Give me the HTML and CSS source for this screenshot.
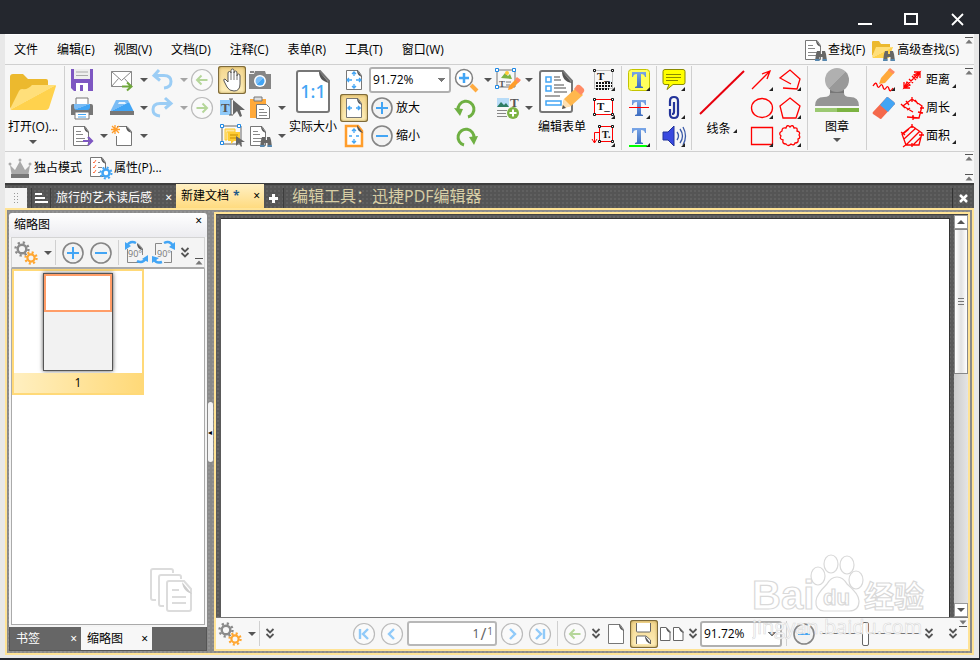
FILE: index.html
```html
<!DOCTYPE html>
<html lang="zh-CN">
<head>
    <meta charset="UTF-8">
    <meta name="viewport" content="width=device-width, initial-scale=1.0">
    <title>迅捷PDF编辑器</title>
    <link rel="stylesheet" href="styles.css">
</head>
<body>
    <!-- Shared icons -->
    <svg width="0" height="0" class="sprite" aria-hidden="true">
        <defs>
            <linearGradient id="gFolder" x1="0" y1="0" x2="1" y2="1"><stop offset=".5" stop-color="#ffdf7a"/><stop offset=".51" stop-color="#ffd24d"/></linearGradient>
            <linearGradient id="gGrey" x1="0" y1="0" x2="1" y2="1"><stop offset=".5" stop-color="#b0b0b0"/><stop offset=".51" stop-color="#999"/></linearGradient>
            <linearGradient id="gStamp" x1="0" y1="0" x2="1" y2="0"><stop offset=".5" stop-color="#9cc972"/><stop offset=".51" stop-color="#7cb342"/></linearGradient>
            <linearGradient id="gBlue" x1="0" y1="0" x2="1" y2="1"><stop offset=".5" stop-color="#7abcf5"/><stop offset=".51" stop-color="#42a5f5"/></linearGradient>
            <linearGradient id="gT" x1="0" y1="0" x2="0" y2="1"><stop offset="0" stop-color="#7aa7e8"/><stop offset="1" stop-color="#3d6cc0"/></linearGradient>
        </defs>
        <symbol id="plus" viewBox="0 0 28 28"><circle cx="14" cy="14" r="10" fill="#f2f2f2" stroke="#858585" stroke-width="1.6"/><path d="M8 14h12M14 8v12" stroke="#42a5f5" stroke-width="2"/></symbol>
        <symbol id="minus" viewBox="0 0 28 28"><circle cx="14" cy="14" r="10" fill="#f2f2f2" stroke="#858585" stroke-width="1.6"/><path d="M8 14h12" stroke="#42a5f5" stroke-width="2"/></symbol>
        <symbol id="back" viewBox="0 0 28 28"><circle cx="14" cy="14" r="10.5" fill="#fafafa" stroke="#bbb" stroke-width="1.2"/><path d="M19.500 14H9M13.500 9.500L9 14l4.500 4.500" fill="none" stroke="#b5d69a" stroke-width="2"/></symbol>
        <symbol id="fwd" viewBox="0 0 28 28"><circle cx="14" cy="14" r="10.5" fill="#fafafa" stroke="#bbb" stroke-width="1.2"/><path d="M8.500 14H19M14.500 9.500L19 14l-4.500 4.500" fill="none" stroke="#b5d69a" stroke-width="2"/></symbol>
        <symbol id="gears" viewBox="0 0 28 28"><circle cx="10" cy="10" r="4.300" fill="none" stroke="#8a8a8a" stroke-width="2.400"/><circle cx="10" cy="10" r="6.500" fill="none" stroke="#8a8a8a" stroke-width="2.400" stroke-dasharray="2.200 2.900"/><circle cx="19" cy="19" r="3.600" fill="none" stroke="#ffa630" stroke-width="2.200"/><circle cx="19" cy="19" r="5.500" fill="none" stroke="#ffa630" stroke-width="2.400" stroke-dasharray="2 2.320"/></symbol>
        <symbol id="chev" viewBox="0 0 10 12"><path d="M1.500 1L5 4.500 8.500 1M1.500 6L5 9.500 8.500 6" fill="none" stroke="#555" stroke-width="1.800"/></symbol>
        <symbol id="pin" viewBox="0 0 8 7"><path d="M0 .5h8" stroke="#555"/><path d="M4 2.500L7.500 6.500h-7z" fill="#777"/></symbol>
        <symbol id="binoc" viewBox="0 0 12 12"><path d="M1 4L2 1h3v3h2V1h3l1 3 1 7H7.500V7h-3v4H0z" fill="#666"/><path d="M0 10h4.500M7.500 10H12" stroke="#42a5f5"/></symbol>
        <symbol id="doc" viewBox="0 0 28 28"><path d="M5.500 4.500H17l3.500 5v14h-15z" fill="#fff" stroke="#777"/><path d="M16 4l5 7c-3-1-5-3-5-7z" fill="#555"/></symbol>
        <symbol id="lines" viewBox="0 0 28 28"><use href="#doc"/><path d="M8 9.500h5M8 12.500h7M8 16.500h9M8 19.500h8" stroke="#888"/></symbol>
        <symbol id="tserif" viewBox="0 0 28 28"><path d="M7 6h14v5h-1c-.4-2-1.200-3-4-3v11.500c0 1 .8 1.200 2 1.300V22h-8v-1.200c1.200-.1 2-.3 2-1.300V8c-2.800 0-3.600 1-4 3H7z" fill="url(#gT)"/></symbol>
        <symbol id="tri" viewBox="0 0 28 28"><path d="M25 21v4h-4z" fill="#222"/></symbol>
    </svg>

    <header class="titlebar">
        <button class="win-btn" aria-label="最小化"><svg width="14" height="14"><path d="M0 12h14" stroke="#fff" stroke-width="2"/></svg></button>
        <button class="win-btn" aria-label="最大化"><svg width="14" height="14"><path d="M1 2h12v10H1z" fill="none" stroke="#fff" stroke-width="2"/></svg></button>
        <button class="win-btn" aria-label="关闭"><svg width="14" height="14"><path d="M2 2l11 11M13 2L2 13" stroke="#fff" stroke-width="1.800"/></svg></button>
    </header>

    <div class="frame">
        <nav class="menubar">
            <button>文件</button>
            <button>编辑(E)</button>
            <button>视图(V)</button>
            <button>文档(D)</button>
            <button>注释(C)</button>
            <button>表单(R)</button>
            <button>工具(T)</button>
            <button>窗口(W)</button>
            <div class="search">
                <button><svg width="28" height="28"><use href="#lines"/><use href="#binoc" x="15" y="14" width="12" height="12"/></svg>查找(F)</button>
                <button><svg width="28" height="28"><path d="M3 6q0-1 1-1h6l2 3h9v5H8L3 20z" fill="#ecb92e"/><path d="M3 21l4-10h17l-4 11H4z" fill="url(#gFolder)"/><use href="#binoc" x="14" y="14" width="12" height="12"/></svg>高级查找(S)</button>
            </div>
            <svg class="pin" width="8" height="7"><use href="#pin"/></svg>
        </nav>

        <div class="ribbon">
            <button class="big open">
                <svg width="48" height="42"><path d="M1 5q0-3 3-3h10l5 5h18q2 0 2 2v6L1 36z" fill="#ecb92e"/><path d="M1 37l9-18q1-2 3-2 6 1 10-4h23q1 0 1 1l-7 22q-1 2-3 2H3q-2 0-2-1z" fill="url(#gFolder)"/></svg>
                <span>打开(O)...</span>
                <i class="arrow"></i>
            </button>
            <div class="sep"></div>
            <div class="stack wide">
                <button class="tool" aria-label="保存"><svg width="28" height="28"><path d="M3 3h22v22H6l-3-3z" fill="#7e57c2"/><path d="M6 3h16v10H6z" fill="#eee"/><path d="M8 6h12M8 9.500h12" stroke="#aaa"/><path d="M8 17h12v8H8z" fill="#fff"/><path d="M12 19h3v6h-3z" fill="#7e57c2"/></svg></button>
                <button class="tool" aria-label="打印"><svg width="28" height="28"><path d="M3 12q0-2 2-2h18q2 0 2 2v9H3z" fill="#777"/><path d="M8 4h12v7H8z" fill="#fff" stroke="#777"/><path d="M6 10h16v3q0 3-3 3H9q-3 0-3-3z" fill="url(#gBlue)"/><path d="M7 18h14v7H7z" fill="#fff" stroke="#777"/><path d="M10 20.500h8M10 23h8" stroke="#42a5f5"/></svg></button>
                <button class="tool drop" aria-label="导出"><svg width="28" height="28"><use href="#lines"/><path d="M15 19h9M20 15l4 4-4 4" fill="none" stroke="#7e57c2" stroke-width="2.200"/></svg><i class="arrow"></i></button>
            </div>
            <div class="stack wide">
                <button class="tool drop" aria-label="发送"><svg width="28" height="28"><path d="M3.500 5.500h20v15h-20z" fill="#fff" stroke="#888"/><path d="M3.500 5.500l10 9 10-9M3.500 20.500l7-8M23.500 20.500l-7-8" fill="none" stroke="#888"/><path d="M14 20.500h9M19 16.500l4.500 4-4.500 4" fill="none" stroke="#6fa83b" stroke-width="2"/></svg><i class="arrow"></i></button>
                <button class="tool drop" aria-label="扫描"><svg width="28" height="28"><path d="M8 6h12l6 12H2z" fill="url(#gBlue)"/><path d="M11 8h6l1 2h-8z" fill="#e6f3ff"/><path d="M2 17h24v4H2z" fill="#777"/></svg><i class="arrow"></i></button>
                <button class="tool drop" aria-label="新建"><svg width="28" height="28"><path d="M9 4.500h10l4.500 5v14h-15V14" fill="#fff" stroke="#777"/><path d="M18 4l6 7c-4-1-6-3-6-7z" fill="#555"/><path d="M7 3v9M3 7.500h9M4 4l7 7M11 4l-7 7" stroke="#ff9d2b" stroke-width="1.300"/></svg><i class="arrow"></i></button>
            </div>
            <div class="stack wide">
                <button class="tool drop faded" aria-label="撤销"><svg width="28" height="28"><path d="M11 4L6 9.500l6 5M6 9.500h10q7 0 7 6 0 6-7 6.500" fill="none" stroke="#42a5f5" stroke-width="3"/></svg><i class="arrow"></i></button>
                <button class="tool drop faded" aria-label="重做"><svg width="28" height="28"><path d="M17 4l6 5.500-6 5M22 9.500H12q-7 0-7 6 0 6 7 6.500" fill="none" stroke="#42a5f5" stroke-width="3"/></svg><i class="arrow"></i></button>
            </div>
            <div class="stack nav">
                <button class="tool" aria-label="后退"><svg width="28" height="28"><use href="#back"/></svg></button>
                <button class="tool" aria-label="前进"><svg width="28" height="28"><use href="#fwd"/></svg></button>
            </div>
            <div class="stack">
                <button class="tool active" aria-label="手形工具"><svg width="28" height="28"><path d="M9 21l-3-6q-1-2 1-2l3 3V7q0-1.500 1.500-1.500T13 7V4.500Q13 3 14.500 3T16 4.500V7q0-2 1.500-2T19 7v3q0-2 1.500-2T22 10v8q0 7-6 7-5 0-7-4z" fill="#fff" stroke="#555"/><path d="M13 6v8M16 6v8M19 9v5" stroke="#777"/></svg></button>
                <button class="tool" aria-label="选择文本"><svg width="28" height="28"><path d="M2 6h11v15H2z" fill="#90caf9"/><text x="3" y="18" class="icon-serif" font-size="13" fill="#555">T</text><path d="M11 5h4M13 5v16M11 21h4" stroke="#555"/><path d="M15 6v15l4-4 3 6 2-1-2-6h5z" fill="#666"/></svg></button>
                <button class="tool" aria-label="选择注释"><svg width="28" height="28"><path d="M4 4h19v18H4z" fill="none" stroke="#666"/><path d="M2.500 2.500h3v3h-3zM19.500 2.500h3v3h-3zM2.500 19.500h3v3h-3z" fill="#fff" stroke="#1e88e5"/><path d="M7 7h10v3H9v8H7z" fill="#ffe59a" stroke="#ffca28"/><path d="M10 10h12v9h-6l-3 3v-3h-3z" fill="#fc3"/><path d="M12 13h8M12 16h8" stroke="#c58b00"/><path d="M18 14v10l3-3 2 4 1-1-1-4h4z" fill="#666"/></svg></button>
            </div>
            <div class="stack wide">
                <button class="tool" aria-label="快照"><svg width="28" height="28"><path d="M3 8h5l1-3h10l1 3h5v15H3z" fill="#858585"/><path d="M4 5h4v2H4z" fill="#888"/><circle cx="14" cy="15" r="6" fill="#fff"/><circle cx="14" cy="15" r="4.500" fill="url(#gBlue)"/></svg></button>
                <button class="tool drop" aria-label="粘贴"><svg width="28" height="28"><path d="M4 5h16v19H4z" fill="#ffa93a"/><path d="M8 3h8v4H8z" fill="#ddd" stroke="#777"/><path d="M10.500 10.500h10l3 3v11h-13z" fill="#fff" stroke="#777"/><path d="M13 15.500h5M13 18.500h8M13 21.500h8" stroke="#888"/></svg><i class="arrow"></i></button>
                <button class="tool drop" aria-label="查找"><svg width="28" height="28"><use href="#lines" x="-1"/><use href="#binoc" x="14" y="14" width="12" height="12"/></svg><i class="arrow"></i></button>
            </div>
            <button class="big actual">
                <svg width="36" height="44"><path d="M4 1h21l9 10v29q0 2-2 2H4q-2 0-2-2V3q0-2 2-2z" fill="#fff" stroke="#777" stroke-width="2"/><path d="M24 1l10 12C27 11 24 8 24 1z" fill="#555"/><text x="18" y="28" text-anchor="middle" class="icon-num" font-size="18" fill="#42a5f5">1:1</text></svg>
                <span>实际大小</span>
            </button>
            <div class="stack">
                <button class="tool" aria-label="适合页面"><svg width="28" height="28"><use href="#doc" x="1"/><path d="M14 6v4M14 18v4M8 14h4M16 14h4M12 8l2-2 2 2M12 20l2 2 2-2M9 12l-2 2 2 2M19 12l2 2-2 2" fill="none" stroke="#42a5f5" stroke-width="1.300"/></svg></button>
                <button class="tool active" aria-label="适合宽度"><svg width="28" height="28"><use href="#doc" x="1"/><path d="M8 14h4M16 14h4M10 12l-2 2 2 2M18 12l2 2-2 2" fill="none" stroke="#42a5f5" stroke-width="1.500"/></svg></button>
                <button class="tool" aria-label="适合可见区域"><svg width="28" height="28"><path d="M6 4h12l4 5v15H6z" fill="#fff" stroke="#ff9d2b" stroke-width="2.500"/><path d="M17 3l6 8c-4-1-6-3-6-8z" fill="#555"/><path d="M14 7v4M14 17v4M9 14h3M16 14h3M12 9l2-2 2 2M12 19l2 2 2-2" fill="none" stroke="#42a5f5" stroke-width="1.300"/></svg></button>
            </div>
            <div class="stack zoom">
                <select class="combo" aria-label="缩放"><option>91.72%</option></select>
                <button class="tool label"><svg width="28" height="28"><use href="#plus"/></svg>放大</button>
                <button class="tool label"><svg width="28" height="28"><use href="#minus"/></svg>缩小</button>
            </div>
            <div class="stack wide">
                <button class="tool drop" aria-label="缩放工具"><svg width="28" height="28"><path d="M19 19l6 6" stroke="#ffab40" stroke-width="4"/><circle cx="12" cy="12" r="8.500" fill="#fff" stroke="#808080" stroke-width="1.500"/><path d="M7 12h10M12 7v10" stroke="#42a5f5" stroke-width="2.500"/></svg><i class="arrow"></i></button>
                <button class="tool" aria-label="逆时针旋转"><svg width="28" height="28"><path d="M6 16a8 8 0 1 1 10 7" fill="none" stroke="#6fb043" stroke-width="3"/><path d="M2 14l9 1-3 7z" fill="#6fb043"/></svg></button>
                <button class="tool" aria-label="顺时针旋转"><svg width="28" height="28"><path d="M12 23a8 8 0 1 1 10-7" fill="none" stroke="#6fb043" stroke-width="3"/><path d="M26 14l-9 1 5 8z" fill="#6fb043"/></svg></button>
            </div>
            <div class="stack edit">
                <button class="tool drop" aria-label="编辑内容"><svg width="28" height="28"><path d="M4 4h18v17H4z" fill="none" stroke="#777"/><path d="M2.500 2.500h3v3h-3zM19.500 2.500h3v3h-3zM2.500 19.500h3v3h-3z" fill="#fff" stroke="#1e88e5"/><path d="M8 12l4-5 3 3 2-2 2 5z" fill="#7cb342"/><circle cx="14" cy="7" r="2" fill="#fc3"/><text x="6" y="21" class="icon-serif" font-size="9" fill="#555">T</text><path d="M13 16h5M13 19h4" stroke="#777"/><path d="M15 24l1-4 8-8 3 3-8 8z" fill="#ff9d2b"/><path d="M22 13l2-2 4 3-3 3z" fill="#ff8a65"/></svg><i class="arrow"></i></button>
                <button class="tool drop" aria-label="添加内容"><svg width="28" height="28"><path d="M4 4h12v9H4z" fill="#b8dcf8"/><path d="M4 13l4-5 3 3 2-2 3 4z" fill="#2e7d64"/><text x="17" y="13" class="icon-serif" font-size="13" fill="#555">T</text><path d="M4 16.500h10M4 19.500h9M4 22.500h10" stroke="#888"/><circle cx="20" cy="19" r="6" fill="#7cb342"/><path d="M16.500 19h7M20 15.500v7" stroke="#fff" stroke-width="2"/></svg><i class="arrow"></i></button>
            </div>
            <button class="big form">
                <svg width="46" height="44"><path d="M3 1h21l9 10v29q0 2-2 2H3q-2 0-2-2V3q0-2 2-2z" fill="#fff" stroke="#777" stroke-width="2"/><path d="M23 1l10 12c-7-1-10-5-10-12z" fill="#555"/><path d="M7 7h5v5H7zM7 16h5v5H7zM7 31h15v4H7z" fill="#fff" stroke="#42a5f5" stroke-width="1.500"/><path d="M15 7h6M15 10h7M15 15h10M15 18h12M15 22h13M6 26h15" stroke="#888" stroke-width="1.300"/><path d="M23 38l2-9 12-11 7 7-12 11z" fill="#ffb74d"/><path d="M35 19l3-4q2-1 4 1l3 3q1 2-1 4l-2 2z" fill="#ff8a65"/><path d="M25 29l7 7-9 3z" fill="#ffe0b2"/><path d="M23 39l1-4 3 3z" fill="#555"/></svg>
                <span>编辑表单</span>
            </button>
            <div class="stack">
                <button class="tool" aria-label="打字机"><svg width="28" height="28"><path d="M4.500 4.500h18v18h-18z" fill="none" stroke="#888" stroke-dasharray="1 1"/><path d="M3.500 3.500h2v2h-2zM21.500 3.500h2v2h-2z" fill="#fff" stroke="#111"/><text x="7" y="14" class="icon-serif" font-size="11" fill="#111">T_</text><path d="M6 17h16M6 20h16M6 23h13" stroke="#111" stroke-width="2" stroke-dasharray="2 1"/><use href="#tri"/></svg></button>
                <button class="tool" aria-label="文本框"><svg width="28" height="28"><path d="M4.500 5.500h18v15h-18z" fill="#fff" stroke="red"/><path d="M3.500 4.500h2v2h-2zM21.500 4.500h2v2h-2zM3.500 19.500h2v2h-2zM21.500 19.500h2v2h-2z" fill="#fff" stroke="#111"/><text x="7" y="16" class="icon-serif" font-size="11" fill="#111">T_</text><use href="#tri"/></svg></button>
                <button class="tool" aria-label="标注"><svg width="28" height="28"><path d="M9.500 4.500h13v15h-13zM10 10.500H4.500V21M2 17l2.500 4L7 17" fill="none" stroke="red"/><path d="M8.500 3.500h2v2h-2zM21.500 3.500h2v2h-2zM8.500 18.500h2v2h-2zM21.500 18.500h2v2h-2z" fill="#fff" stroke="#111"/><text x="12" y="16" class="icon-serif" font-size="10" fill="#111">T.</text><use href="#tri"/></svg></button>
            </div>
            <div class="sep"></div>
            <div class="stack">
                <button class="tool" aria-label="高亮"><svg width="28" height="28"><rect x="3.500" y="3.500" width="21" height="21" rx="3" fill="#ffff5c" stroke="#c4c400"/><use href="#tserif"/><use href="#tri"/></svg></button>
                <button class="tool" aria-label="删除线"><svg width="28" height="28"><use href="#tserif"/><path d="M4 13.500h20" stroke="red"/><use href="#tri"/></svg></button>
                <button class="tool" aria-label="下划线"><svg width="28" height="28"><use href="#tserif"/><path d="M4 24h18" stroke="#0f0" stroke-width="2"/><use href="#tri"/></svg></button>
            </div>
            <div class="sep"></div>
            <div class="stack">
                <button class="tool" aria-label="便笺"><svg width="28" height="28"><path d="M5 3.500h18q2 0 2 2v11q0 2-2 2H13l-6 5 2-5H5q-2 0-2-2v-11q0-2 2-2z" fill="#ff0" stroke="#8a8a00"/><path d="M6 8.500h15M6 11.500h15M6 14.500h12" stroke="#8a8a00"/><use href="#tri"/></svg></button>
                <button class="tool" aria-label="附件"><svg width="28" height="28"><path d="M10 12V7q0-4 4-4t4 4v13q0 4-4 4t-4-4v-5M14 8v10q0 2-2 2M18 16v-5" fill="none" stroke="#23349a" stroke-width="2.200"/><use href="#tri"/></svg></button>
                <button class="tool" aria-label="声音"><svg width="28" height="28"><path d="M3 10h5l6-6v20l-6-6H3z" fill="#3949e0" stroke="#23349a"/><path d="M17 10q3 4 0 8M20 7q5 7 0 14M23 5q5 9 0 18" fill="none" stroke="#3b5aa8" stroke-width="1.300"/><use href="#tri"/></svg></button>
            </div>
            <div class="sep"></div>
            <button class="big line">
                <svg width="46" height="46"><path d="M1 44L45 1" stroke="#e8000d" stroke-width="2"/></svg>
                <span>线条<i class="corner"></i></span>
            </button>
            <div class="stack">
                <button class="tool red" aria-label="箭头"><svg width="28" height="28"><path d="M4 23L22 5M14 8l8-3-3 8"/><use href="#tri"/></svg></button>
                <button class="tool red" aria-label="椭圆"><svg width="28" height="28"><ellipse cx="14" cy="14" rx="10.500" ry="9.500"/><use href="#tri"/></svg></button>
                <button class="tool red" aria-label="矩形"><svg width="28" height="28"><path d="M3.500 5.500h21v17h-21z"/><use href="#tri"/></svg></button>
            </div>
            <div class="stack">
                <button class="tool red" aria-label="折线"><svg width="28" height="28"><path d="M15 18L4 12l10-8 10 9-3 10-14-1"/><use href="#tri"/></svg></button>
                <button class="tool red" aria-label="多边形"><svg width="28" height="28"><path d="M14 4l10 8-4 12H7L4 12z"/><use href="#tri"/></svg></button>
                <button class="tool red" aria-label="云形"><svg width="28" height="28"><path d="M14 5q3-3 4 1 4-1 3 3 4 1 2 4 2 3-1 4 1 4-3 4-1 3-4 1-3 3-5 0-4 0-3-4-4-1-2-4-3-3 1-5 0-4 4-3 1-4 4-1z"/><use href="#tri"/></svg></button>
            </div>
            <div class="sep"></div>
            <button class="big stamp">
                <svg width="44" height="50"><path d="M15 20h14v12H15z" fill="#777"/><circle cx="22" cy="14" r="12" fill="url(#gGrey)"/><path d="M0 40q0-9 9-9 6 0 6-4h14q0 4 6 4 9 0 9 9z" fill="#959595"/><path d="M0 42h44v4H0z" fill="url(#gStamp)"/></svg>
                <span>图章</span>
                <i class="arrow"></i>
            </button>
            <div class="sep"></div>
            <div class="stack">
                <button class="tool" aria-label="铅笔"><svg width="28" height="28"><path d="M3 20q3-5 4-1t3 1 3 1 3 1 3 1 4-1" fill="none" stroke="red" stroke-width="1.300"/><path d="M9 18l2-6 8-9 5 4-9 10z" fill="#ffa93a"/><path d="M18 4l2-2 5 4-2 2z" fill="#ff8a65"/><use href="#tri"/></svg></button>
                <button class="tool" aria-label="橡皮擦"><svg width="28" height="28"><path d="M3 18L16 4q1-2 3 0l5 4q2 2 0 3L12 24q-1 2-3 0l-6-4q-1-1 0-2z" fill="#f4694c"/><path d="M10 11l6-7q1-2 3 0l5 4q2 2 0 3l-6 7z" fill="#42a5f5"/></svg></button>
            </div>
            <div class="stack measure">
                <button class="tool label"><svg width="28" height="28" class="red"><path d="M6 22L22 6M6 16v6h6M16 6h6v6M6 22l3-6 3 3zM22 6l-6 3 3 3zM11 13l4 4M14 10l4 4"/></svg>距离<i class="corner"></i></button>
                <button class="tool label"><svg width="28" height="28" class="red"><path d="M15 18L5 12l9-7 10 7-3 12-12-1M3 10l4 4M14 3v5M8 7l3 4M17 6l3 4M26 14h-4M25 19l-5-1M15 21v5M9 16l3-2"/></svg>周长<i class="corner"></i></button>
                <button class="tool label"><svg width="28" height="28" class="red"><path d="M14 4l10 7-3 12H8L4 12zM6 17L18 6M8 23L22 9M15 23l8-8M5 12l6-5M3 10l4 3M14 2v4M26 13h-5M14 21v4M9 22l-4 3"/></svg>面积<i class="corner"></i></button>
            </div>
            <svg class="pin" width="8" height="7"><use href="#pin"/></svg>
        </div>

        <div class="quickbar">
            <button><svg width="28" height="28"><path d="M4 11l5 5 5-9 5 9 5-5-2 12H6z" fill="#aaa"/><circle cx="4" cy="10" r="1.500" fill="#aaa"/><circle cx="14" cy="6" r="1.500" fill="#aaa"/><circle cx="24" cy="10" r="1.500" fill="#aaa"/><path d="M5 20h18v4H5z" fill="#777"/></svg>独占模式</button>
            <button class="props"><svg width="28" height="28"><use href="#doc" x="-1" y="-1"/><path d="M7 8l1 1 2-3M7 13l1 1 2-3M7 18l1 1 2-3" fill="none" stroke="#ff7043"/><path d="M12 8.500h2M12 13.500h4M12 18.500h2" stroke="#888"/><circle cx="20" cy="19" r="3.500" fill="#fff" stroke="#42a5f5" stroke-width="2.500"/><circle cx="20" cy="19" r="5.500" fill="none" stroke="#42a5f5" stroke-width="2" stroke-dasharray="2 2.320"/></svg>属性(P)...</button>
            <div class="pins">
                <svg width="8" height="7"><use href="#pin"/></svg>
                <svg width="8" height="7"><use href="#pin"/></svg>
            </div>
        </div>

        <div class="tabbar">
            <div class="grip"></div>
            <button class="list" aria-label="文档列表"><svg width="13" height="12"><path d="M0 2h7M0 6h10M0 10h13" stroke="#fff" stroke-width="2"/></svg></button>
            <div class="tab">旅行的艺术读后感<button class="close" aria-label="关闭">×</button></div>
            <div class="tab current">新建文档<b>*</b><button class="close" aria-label="关闭">×</button></div>
            <button class="add" aria-label="新建标签"><svg width="9" height="9"><path d="M0 4.500h9M4.500 0v9" stroke="#fff" stroke-width="3"/></svg></button>
            <h1>编辑工具：迅捷PDF编辑器</h1>
            <button class="close-all" aria-label="关闭全部"><svg width="9" height="9"><path d="M1 1l7 7M8 1L1 8" stroke="#fff" stroke-width="2.500"/></svg></button>
        </div>

        <div class="workspace">
            <aside class="panel">
                <div class="panel-title">缩略图<button class="close" aria-label="关闭">×</button></div>
                <div class="panel-body">
                    <div class="panel-tools">
                        <button class="tool drop" aria-label="选项"><svg width="28" height="28"><use href="#gears"/></svg><i class="arrow"></i></button>
                        <div class="sep"></div>
                        <button class="tool" aria-label="放大缩略图"><svg width="28" height="28"><use href="#plus"/></svg></button>
                        <button class="tool" aria-label="缩小缩略图"><svg width="28" height="28"><use href="#minus"/></svg></button>
                        <div class="sep"></div>
                        <button class="tool" aria-label="向左旋转"><svg width="28" height="28"><path d="M5.500 10v13.500H17M16 4.500l4.500 5V16" fill="none" stroke="#888"/><path d="M15 4l6 7c-4 0-6-3-6-7z" fill="#555"/><text x="6" y="18" class="icon-deg" font-size="9" fill="#777">90°</text><path d="M14 4q-6-3-9 3M15 22q6 3 9-3" fill="none" stroke="#42a5f5" stroke-width="2.500"/><path d="M3 3v8l6-4zM26 23v-7l-6 4z" fill="#42a5f5"/></svg></button>
                        <button class="tool" aria-label="向右旋转"><svg width="28" height="28"><path d="M12 4.500H5.500V16M21.500 12v11.500H14" fill="none" stroke="#888"/><text x="7" y="18" class="icon-deg" font-size="9" fill="#777">90°</text><path d="M14 4q6-3 9 3M12 23q-6 2-8-3" fill="none" stroke="#42a5f5" stroke-width="2.500"/><path d="M25 3v8l-6-3zM2 24v-7l7 2z" fill="#42a5f5"/></svg></button>
                        <button class="more" aria-label="更多"><svg width="10" height="12"><use href="#chev"/></svg></button>
                        <svg class="pin" width="8" height="7"><use href="#pin"/></svg>
                    </div>
                    <div class="thumbs">
                        <figure>
                            <div class="thumb"><div class="view"></div></div>
                            <figcaption>1</figcaption>
                        </figure>
                        <svg class="stack-mark" width="44" height="44"><g fill="#fff" stroke="#dcdcdc" stroke-width="2"><path d="M6 32H3q-2 0-2-2V3q0-2 2-2h18q2 0 2 2v2M14 38h-3q-2 0-2-2V9q0-2 2-2h18q2 0 2 2v2"/><path d="M19 13h15l7 8v20q0 2-2 2H19q-2 0-2-2V15q0-2 2-2z"/><path d="M22 22h7M22 29h14M22 35h14"/></g><path d="M32 14l10 12c-5-2-9-4-10-12z" fill="#ccc"/></svg>
                    </div>
                </div>
                <div class="panel-tabs">
                    <div class="ptab">书签<button class="close" aria-label="关闭">×</button></div>
                    <div class="ptab current">缩略图<button class="close" aria-label="关闭">×</button></div>
                </div>
            </aside>

            <div class="splitter"><span>◂</span></div>

            <main class="document">
                <div class="view-area">
                    <div class="page"></div>
                    <div class="scrollbar">
                        <button class="up" aria-label="向上"><i class="arrow"></i></button>
                        <div class="handle"></div>
                        <button class="down" aria-label="向下"><i class="arrow"></i></button>
                    </div>
                </div>
                <div class="statusbar">
                    <button class="tool drop" aria-label="选项"><svg width="28" height="28"><use href="#gears"/></svg><i class="arrow"></i></button>
                    <div class="sep"></div>
                    <button class="more" aria-label="更多"><svg width="10" height="12"><use href="#chev"/></svg></button>
                    <div class="pager">
                        <button class="tool blue" aria-label="第一页"><svg width="28" height="28"><circle cx="14" cy="14" r="10.500"/><path d="M10 9v10M18 9l-5 5 5 5"/></svg></button>
                        <button class="tool blue" aria-label="上一页"><svg width="28" height="28"><circle cx="14" cy="14" r="10.500"/><path d="M16 9l-5 5 5 5"/></svg></button>
                        <label class="pageno"><input type="text" value="1" aria-label="页码"><span>/</span><sup>1</sup></label>
                        <button class="tool blue" aria-label="下一页"><svg width="28" height="28"><circle cx="14" cy="14" r="10.500"/><path d="M12 9l5 5-5 5"/></svg></button>
                        <button class="tool blue" aria-label="最后一页"><svg width="28" height="28"><circle cx="14" cy="14" r="10.500"/><path d="M18 9v10M10 9l5 5-5 5"/></svg></button>
                    </div>
                    <div class="sep"></div>
                    <button class="tool" aria-label="后退"><svg width="28" height="28"><use href="#back"/></svg></button>
                    <button class="more" aria-label="更多"><svg width="10" height="12"><use href="#chev"/></svg></button>
                    <button class="tool" aria-label="单页"><svg width="28" height="28"><use href="#doc" x="1"/></svg></button>
                    <button class="tool active" aria-label="连续"><svg width="28" height="28"><path d="M6.500 3v8q0 1 1 1h12q1 0 1-1V3M6.500 24v-7q0-1 1-1H16l4.500 4v4" fill="#fff" stroke="#666"/><path d="M15 16l6 8c-4-1-6-4-6-8z" fill="#555"/></svg></button>
                    <button class="tool" aria-label="双页"><svg width="28" height="28"><path d="M2.500 7.500H8l4 4v9H2.500zM15.500 7.500H21l4 4v9h-9.500z" fill="#fff" stroke="#666"/><path d="M8 7l5 6q-5-1-5-6zM21 7l5 6q-5-1-5-6z" fill="#555"/></svg></button>
                    <button class="more" aria-label="更多"><svg width="10" height="12"><use href="#chev"/></svg></button>
                    <select class="combo" aria-label="缩放"><option>91.72%</option></select>
                    <div class="sep"></div>
                    <button class="tool" aria-label="缩小"><svg width="28" height="28"><use href="#minus"/></svg></button>
                    <input type="range" min="0" max="100" value="45" aria-label="缩放比例">
                    <button class="more" aria-label="更多"><svg width="10" height="12"><use href="#chev"/></svg></button>
                    <button class="more last" aria-label="更多"><svg width="10" height="12"><use href="#chev"/></svg></button>
                    <svg class="pin" width="8" height="7"><use href="#pin"/></svg>
                </div>
            </main>
        </div>
    </div>

    <svg class="watermark" width="180" height="90" aria-hidden="true">
        <g fill="#fff" fill-opacity=".8" stroke="#d9d9d9" stroke-width="1.200">
            <text x="0" y="56" font-size="40" class="wm-latin">Bai</text>
            <ellipse cx="66" cy="23" rx="7" ry="9"/><ellipse cx="79" cy="11" rx="7" ry="9"/><ellipse cx="95" cy="12" rx="7" ry="9"/><ellipse cx="104" cy="27" rx="7" ry="9"/>
            <path d="M85 24q6 0 10 7 12 10 12 17 0 10-10 10H72q-9-1-8-10 0-6 11-17 4-7 10-7z"/>
            <text x="71" y="52" font-size="22" class="wm-latin">du</text>
            <text x="112" y="54" font-size="30" class="wm-cjk">经验</text>
        </g>
        <text x="0" y="81" font-size="20" class="wm-url">jingyan.baidu.com</text>
    </svg>
</body>
</html>
```
FILE: styles.css
```css
* {
    box-sizing: border-box;
}

body {
    margin: 0;
    min-height: 100vh;
    display: flex;
    flex-direction: column;
    background: #24272e;
    font-family: "Open Sans", "Noto Sans CJK SC", sans-serif;
    font-size: 12px;
    line-height: 16px;
    color: #000;
}

button {
    display: flex;
    align-items: center;
    padding: 0;
    border: none;
    background: none;
    font: inherit;
    color: inherit;
    white-space: nowrap;
}

svg {
    display: block;
    flex: none;
}

.sprite {
    position: absolute;
}

/* Window title bar */
.titlebar {
    height: 34px;
    display: flex;
    justify-content: flex-end;
    align-items: center;
    gap: 32px;
    padding: 4px 16px 0 0;
}

.frame {
    flex: 1;
    display: flex;
    flex-direction: column;
    margin: 0 1px 2px 0;
    padding: 0 5px 3px;
    background: #e8e8e8;
}

/* Menu */
.menubar {
    height: 31px;
    display: flex;
    align-items: center;
    gap: 1px;
    background: #f7f7f7;
    border-top: 1px solid #fff;
    border-bottom: 1px solid #d0d0d0;
}

.menubar > button {
    padding: 0 9px;
}

.search {
    display: flex;
    margin-left: auto;
    gap: 4px;
}

.pin {
    align-self: flex-start;
    margin: 2px 1px 0 5px;
}

/* Ribbon */
.ribbon {
    display: flex;
    padding: 1px 0;
    background: #f7f7f7;
    border-bottom: 1px solid #d0d0d0;
}

.ribbon .pin {
    margin-left: auto;
}

.sep {
    width: 1px;
    margin: 0 3px;
    background: #d0d0d0;
}

.stack {
    width: 28px;
    flex: none;
    display: flex;
    flex-direction: column;
}

.stack.wide {
    width: 40px;
}

.stack.edit {
    width: 42px;
    padding-left: 1px;
}

.stack.nav {
    width: 30px;
}

.stack.zoom {
    width: 84px;
}

.stack.measure {
    width: 62px;
}

.tool {
    height: 28px;
    width: 28px;
    flex: none;
}

.tool.drop {
    width: 40px;
    gap: 4px;
}

.tool.label {
    width: auto;
}

.tool.active {
    border-radius: 3px;
    background: linear-gradient(#f3d58c, #fff0bd);
    box-shadow: inset 0 0 0 1px #7d6a3c, inset 0 0 3px 1px #b89a4a;
}

.faded {
    opacity: 0.5;
}

.arrow {
    border: 4px solid transparent;
    border-top-color: #555;
    border-bottom: none;
}

.corner {
    display: inline-block;
    border: 2px solid #222;
    border-top-color: transparent;
    border-left-color: transparent;
    align-self: flex-end;
    margin: 0 0 6px 2px;
}

.big {
    flex: none;
    flex-direction: column;
    padding-top: 4px;
    gap: 4px;
}

.big span {
    line-height: 18px;
}

.big .corner {
    margin-bottom: 0;
}

.open {
    width: 56px;
    padding-top: 6px;
}

.actual {
    width: 54px;
}

.form {
    width: 56px;
}

.line {
    width: 53px;
}

.stamp {
    width: 52px;
    padding-top: 0;
    gap: 2px;
}

.red {
    fill: none;
    stroke: red;
    stroke-width: 1.3;
}

.red use {
    stroke: none;
}

.icon-serif {
    font-family: "Liberation Serif", serif;
    font-weight: bold;
}

.icon-num {
    font-family: "Noto Sans", sans-serif;
    font-weight: 500;
}

.icon-deg {
    font-family: "Open Sans", sans-serif;
}

.combo {
    appearance: none;
    width: 82px;
    height: 26px;
    flex: none;
    margin: 1px;
    padding: 0 2px;
    border: 2px solid #b0b0b0;
    border-radius: 3px;
    background: #fff conic-gradient(from 315deg at 50% 100%, #777 0 90deg, #fff 0) no-repeat right 4px center / 8px 4px;
    background: #fff conic-gradient(from 315deg at 50% 100%, #777 0 90deg, #fff 0) no-repeat right 4px center / 8px 4px;
    font: inherit;
    color: #000;
}

/* Second toolbar */
.quickbar {
    height: 31px;
    display: flex;
    align-items: center;
    gap: 4px;
    padding-left: 1px;
    background: #f7f7f7;
}

.pins {
    align-self: stretch;
    display: flex;
    flex-direction: column;
    justify-content: space-between;
    margin-left: auto;
    padding: 2px 1px;
}

/* Document tabs */
.tabbar {
    height: 25px;
    display: flex;
    align-items: stretch;
    padding-top: 3px;
    background: #555 radial-gradient(#606060 1px, transparent 1px) 0 0 / 4px 4px;
    border-top: 2px solid #3d3d3d;
    color: #fff;
}

.grip {
    width: 22px;
    margin-right: 4px;
    border: solid #f4f4f4;
    border-width: 4px 8px;
    background: #f4f4f4 radial-gradient(circle, #999 1px, #f4f4f4 1px) 0 0 / 3px 3px;
}

.list {
    width: 19px;
    justify-content: center;
    border-left: 1px solid #3d3d3d;
}

.tab {
    width: 126px;
    display: flex;
    align-items: center;
    padding: 0 4px 0 5px;
    border-left: 1px solid #3d3d3d;
    white-space: nowrap;
}

.close {
    margin-left: auto;
    font-family: "Noto Sans", sans-serif;
}

.tab.current {
    width: 88px;
    margin-top: -4px;
    border-left: none;
    background: linear-gradient(#fff0c4, #ffdb80);
    color: #000;
}

.tab b {
    margin-left: 4px;
    color: #1e5a8a;
}

.add {
    width: 20px;
    justify-content: center;
    border-right: 1px solid #3d3d3d;
}

h1 {
    margin: 0 0 0 8px;
    font-size: 16px;
    font-weight: normal;
    line-height: 16px;
    color: #d8cfa6;
}

.close-all {
    width: 22px;
    margin-left: auto;
    justify-content: center;
    border-left: 1px solid #333;
}

/* Workspace */
.workspace {
    flex: 1;
    display: flex;
    padding: 2px;
    border: 2px solid #ffe395;
    background: #8a8a8a radial-gradient(#949494 1px, transparent 1px) 0 0 / 4px 4px;
}

.panel {
    width: 198px;
    flex: none;
    display: flex;
    flex-direction: column;
    padding-top: 1px;
}

.panel-title {
    height: 24px;
    display: flex;
    align-items: center;
    padding: 0 5px;
    border-radius: 3px 3px 0 0;
    background: linear-gradient(#fff, #ececf0);
}

.panel-title .close {
    align-self: flex-start;
}

.panel-body {
    flex: 1;
    display: flex;
    flex-direction: column;
    padding: 0 2px 2px;
    background: #f4f4f4;
}

.panel-tools {
    height: 32px;
    display: flex;
    align-items: center;
    border: 1px solid #d4d4d4;
    border-bottom: 2px solid #aaa;
}

.panel-tools .sep,
.statusbar .sep {
    height: 25px;
}

.more {
    width: 13px;
    flex: none;
    justify-content: center;
}

.panel-tools .pin {
    align-self: flex-end;
    margin: 0 1px 2px auto;
}

.thumbs {
    flex: 1;
    display: flex;
    flex-direction: column;
    justify-content: space-between;
    border: 1px solid #aaa;
    border-top: none;
    background: #fff;
}

figure {
    width: 132px;
    margin: 0;
    border: 2px solid #ffd978;
}

.thumb {
    width: 70px;
    height: 98px;
    margin: 2px 29px;
    border: 1px solid #555;
    background: #f2f2f2;
    box-shadow: 0 0 4px #555;
}

.view {
    height: 38px;
    border: 2px solid #ff9d68;
    background: #fff;
}

figcaption {
    line-height: 20px;
    text-align: center;
    background: linear-gradient(90deg, #ffefc0, #ffd978);
}

.stack-mark {
    align-self: flex-end;
    margin: 0 10px 12px 0;
}

.panel-tabs {
    display: flex;
    height: 24px;
    background: #666;
    border: 1px solid #555;
    border-top: none;
    color: #fff;
}

.ptab {
    width: 71px;
    display: flex;
    align-items: center;
    padding: 0 4px 0 6px;
}

.ptab.current {
    background: #f7f7f7;
    color: #000;
}

.splitter {
    width: 7px;
    flex: none;
    display: flex;
    align-items: center;
    justify-content: center;
}

.splitter span {
    width: 5px;
    font-size: 8px;
    line-height: 60px;
    border-radius: 3px;
    background: #f4f4f4;
}

/* Document */
.document {
    flex: 1;
    min-width: 0;
    display: flex;
    flex-direction: column;
    border: 2px solid #ffe395;
}

.view-area {
    flex: 1;
    display: flex;
    padding-left: 5px;
    background: #5a5a5a radial-gradient(#666 1px, transparent 1px) 0 0 / 4px 4px;
    border-top: 1px solid #444;
}

.page {
    flex: 1;
    margin: 3px 4px 0 0;
    border: 1px solid #333;
    border-width: 1px 1px 0 0;
    background: #fff;
}

.scrollbar {
    width: 14px;
    display: flex;
    flex-direction: column;
    background: linear-gradient(90deg, #ccc, #e4e4e4);
}

.scrollbar button {
    height: 14px;
    justify-content: center;
    border: 1px solid #999;
    background: #fff;
}

.up .arrow {
    rotate: 180deg;
}

.down {
    margin-top: auto;
}

.handle {
    height: 145px;
    border: 1px solid #888;
    background:
        repeating-linear-gradient(#777 0 1px, transparent 1px 3px) center / 6px 7px no-repeat,
        linear-gradient(90deg, #fff, #e2e2e2, #fff);
}

.statusbar {
    height: 32px;
    display: flex;
    align-items: center;
    border-top: 1px solid #777;
    background: #f7f7f7;
}

.pager {
    display: flex;
    align-items: center;
    margin-left: auto;
}

.blue svg {
    fill: none;
    stroke: #90caf9;
    stroke-width: 2.4;
}

.blue circle {
    fill: #fafafa;
    stroke: #bbb;
    stroke-width: 1.2;
}

.pageno {
    width: 90px;
    height: 25px;
    display: flex;
    align-items: center;
    margin: 0 1px;
    padding: 0 2px;
    border: 2px solid #b8b8b8;
    border-radius: 3px;
    background: #fff;
    color: #666;
}

.pageno input {
    flex: 1;
    min-width: 0;
    padding: 0;
    border: none;
    outline: none;
    background: none;
    text-align: right;
    font: inherit;
    color: #555;
}

.pageno span {
    padding: 0 1px;
    font-size: 16px;
}

.pageno sup {
    align-self: flex-start;
    font-size: 10px;
    line-height: 16px;
}

input[type="range"] {
    appearance: none;
    width: 100px;
    height: 24px;
    margin: 0 2px;
    background: linear-gradient(#777, #777) center / 100% 1px no-repeat;
}

input[type="range"]::-webkit-slider-thumb {
    appearance: none;
    width: 7px;
    height: 24px;
    border: 1px solid #666;
    border-radius: 2px;
    background: #fff;
}

.last {
    margin-left: 11px;
}

.statusbar .pin {
    margin: 2px 1px 0 0;
    rotate: 180deg;
}

/* Overlay mark in the page corner */
.watermark {
    position: absolute;
    right: 48px;
    bottom: 17px;
    pointer-events: none;
}

.wm-latin {
    font-family: "Liberation Sans", sans-serif;
    font-weight: bold;
}

.wm-cjk {
    font-family: "Noto Sans CJK SC", sans-serif;
    font-weight: bold;
}

.wm-url {
    font-family: "Open Sans", sans-serif;
    fill: #fff;
    stroke: #d9d9d9;
    stroke-width: 0.6;
}
```
